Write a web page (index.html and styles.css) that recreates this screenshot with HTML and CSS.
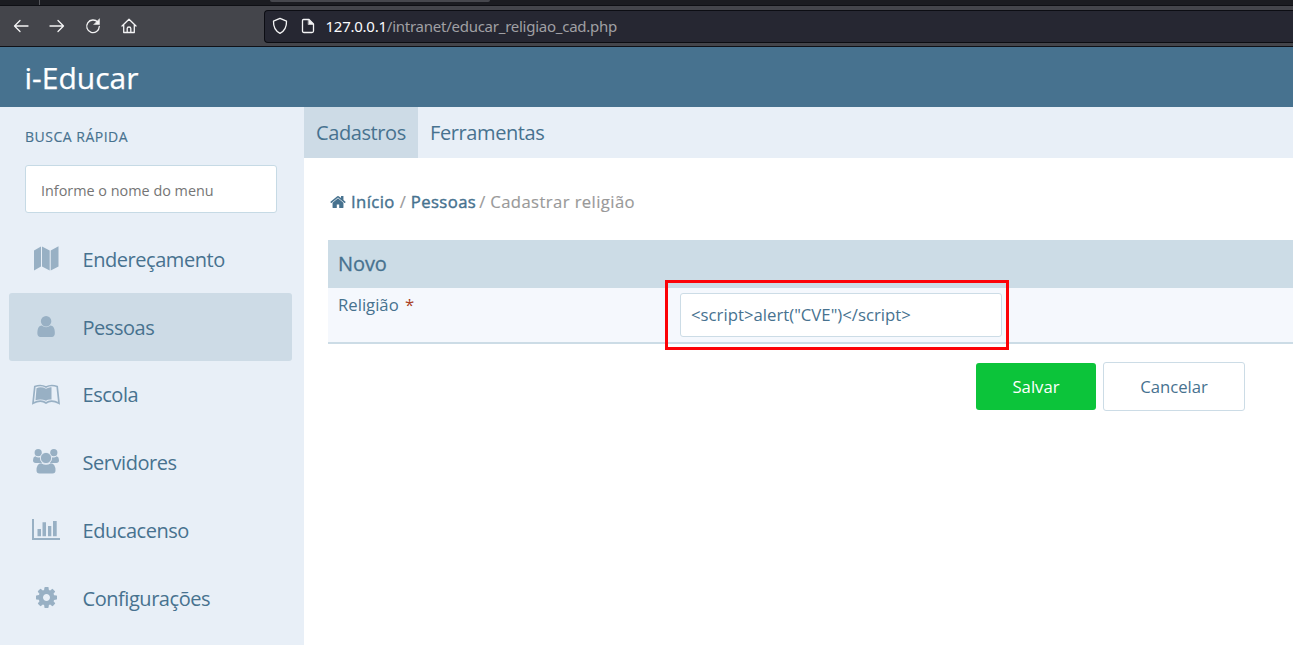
FILE: index.html
```html
<!DOCTYPE html>
<html lang="pt-BR">
<head>
<meta charset="utf-8">
<title>i-Educar</title>
<link rel="stylesheet" href="styles.css">
</head>
<body>
<div class="tabstrip"><span class="tab-divider"></span><span class="tab-edge"></span></div>
<div class="toolbar">
  <div class="nav-buttons">
    <svg width="16" height="16" viewBox="0 0 16 16"><path d="M15 8H1.5M7 2.5L1.5 8L7 13.5"/></svg>
    <svg width="16" height="16" viewBox="0 0 16 16"><path d="M1 8h13.500M9 2.500L14.500 8L9 13.500"/></svg>
    <svg width="16" height="16" viewBox="0 0 16 16"><path d="M12.800 4.200A6.300 6.300 0 1 0 14.300 8.500"/><path class="solid" d="M14.500 1v5.500H9z"/></svg>
    <svg width="16" height="16" viewBox="0 0 16 16"><path d="M1 8L8 1.200L15 8M2.700 6.700v7.800h10.600V6.700M6.200 14.500v-4q0-1.500 1.800-1.500t1.800 1.500v4"/></svg>
  </div>
  <div class="address">
    <svg width="16" height="18" viewBox="0 0 16 18"><path d="M8 1.300L14.500 4.200C14.700 9.500 12.500 14 8 16.300C3.500 14 1.300 9.500 1.500 4.200Z"/></svg>
    <svg width="14" height="16" viewBox="0 0 14 16"><path d="M2.500 1.500H8L12.500 6v7q0 1.500-1.500 1.500H3Q1.500 14.500 1.500 13V2.500Q1.500 1.500 2.500 1.500Z"/><path class="solid" d="M7.500 1.500L12.500 6.500H7.500z"/></svg>
    <span class="url"><b>127.0.0.1</b>/intranet/educar_religiao_cad.php</span>
  </div>
</div>
<header class="brand">i-Educar</header>
<div class="layout">
  <aside class="sidebar">
    <div class="search-title">BUSCA RÁPIDA</div>
    <input class="search" type="text" placeholder="Informe o nome do menu">
    <nav class="menu">
      <a class="item"><svg width="28" height="28" viewBox="0 0 28 28"><path d="M2 5.500L9 1.500V21.500L2 25.500ZM10 1.500L17.700 5.500V25.500L10 21.500ZM18.700 5.500L26.500 1.300V21.500L18.700 25.500Z"/></svg><span>Endereçamento</span></a>
      <a class="item active"><svg width="28" height="28" viewBox="0 0 28 28"><path transform="translate(1.850 1.250) scale(.01367)" d="M1536 1399q0 109-62.500 187t-150.500 78h-854q-88 0-150.500-78t-62.500-187q0-85 8.500-160.500t31.500-152 58.500-131 94-89 134.500-34.500q131 128 313 128t313-128q76 0 134.500 34.500t94 89 58.500 131 31.500 152 8.500 160.500zm-256-887q0 159-112.500 271.500t-271.500 112.500-271.500-112.500-112.500-271.500 112.500-271.500 271.500-112.500 271.500 112.500 112.500 271.500z"/></svg><span>Pessoas</span></a>
      <a class="item"><svg width="28" height="28" viewBox="0 0 28 28"><path class="outline" d="M2.800 5.500Q9 3.300 14 6Q19 3.300 25.200 5.500L27 22.200Q19 18.200 14 22Q9 18.200 1 22.200Z"/><path d="M4.500 7.300Q9 5.200 14 7.800Q17 6 19.500 6.300V18.600Q16 18.200 14 19.800Q9 17.500 3.500 19.300Z"/></svg><span>Escola</span></a>
      <a class="item"><svg width="28" height="28" viewBox="0 0 28 28"><circle cx="6.200" cy="3.700" r="3.600"/><circle cx="21.800" cy="3.700" r="3.600"/><path d="M3.200 7.300Q6 9.100 8 8.200Q8 11.500 10 14H3.700Q1 14 1 11.300Q1 8 3.200 7.300ZM24.800 7.300Q22 9.100 20 8.200Q20 11.500 18 14H24.300Q27 14 27 11.300Q27 8 24.800 7.300Z"/><path d="M9.300 14.200Q14 17.400 18.700 14.200Q23.500 14.600 23.500 21.500Q23.500 24.500 20.500 24.500H7.500Q4.500 24.500 4.500 21.500Q4.500 14.600 9.300 14.200Z"/><circle class="front" cx="14" cy="9" r="5.600"/></svg><span>Servidores</span></a>
      <a class="item"><svg width="28" height="28" viewBox="0 0 28 28"><path d="M0 2H2V21H28V23H0ZM5.500 12H9V19.300H5.500ZM10.500 5.300H14V19.300H10.500ZM16 9H19.300V19.300H16ZM21 4H24.700V19.300H21Z"/></svg><span>Educacenso</span></a>
      <a class="item"><svg width="28" height="28" viewBox="0 0 28 28"><path transform="translate(2.250 .250) scale(.01367)" d="M1152 896q0-106-75-181t-181-75-181 75-75 181 75 181 181 75 181-75 75-181zm512-109v222q0 12-8 23t-20 13l-185 28q-19 54-39 91 35 50 107 138 10 12 10 25t-9 23q-27 37-99 108t-94 71q-12 0-26-9l-138-108q-44 23-91 38-16 136-29 186-7 28-36 28h-222q-14 0-24.500-8.500t-11.500-21.500l-28-184q-49-16-90-37l-141 107q-10 9-25 9-14 0-25-11-126-114-165-168-7-10-7-23 0-12 8-23 15-21 51-66.500t54-70.500q-27-50-41-99l-183-27q-13-2-21-12.500t-8-23.500v-222q0-12 8-23t19-13l186-28q14-46 39-92-40-57-107-138-10-12-10-24 0-10 9-23 26-36 98.500-107.500t94.500-71.500q13 0 26 10l138 107q44-23 91-38 16-136 29-186 7-28 36-28h222q14 0 24.500 8.500t11.500 21.500l28 184q49 16 90 37l142-107q9-9 24-9 13 0 25 10 129 119 165 170 7 8 7 22 0 12-8 23-15 21-51 66.500t-54 70.500q26 50 41 98l183 28q13 2 21 12.500t8 23.500z"/></svg><span>Configurações</span></a>
    </nav>
  </aside>
  <main class="main">
    <nav class="tabs"><a class="tab current">Cadastros</a><a class="tab">Ferramentas</a></nav>
    <div class="content">
      <div class="crumbs">
        <svg width="16" height="16" viewBox="50 50 1692 1692"><path d="M1472 992v480q0 26-19 45t-45 19h-384v-384h-256v384h-384q-26 0-45-19t-19-45v-480q0-1 .500-3t.500-3l575-474 575 474q1 2 1 6zm223-69l-62 74q-8 9-21 11h-3q-13 0-21-7l-692-577-692 577q-12 8-24 7-13-2-21-11l-62-74q-8-10-7-23.500t11-21.500l719-599q32-26 76-26t76 26l244 204v-195q0-14 9-23t23-9h192q14 0 23 9t9 23v408l219 182q10 8 11 21.500t-7 23.500z"/></svg>
        <a class="crumb-link">Início</a><span class="sep">/</span><a class="crumb-link">Pessoas</a><span class="sep2">/</span><span class="here">Cadastrar religião</span>
      </div>
      <section class="form">
        <h2 class="form-title">Novo</h2>
        <div class="form-row">
          <label class="form-label">Religião <span class="required">*</span></label>
          <div class="field"><input class="text" type="text" value="&lt;script&gt;alert(&quot;CVE&quot;)&lt;/script&gt;"><span class="highlight"></span></div>
        </div>
      </section>
      <div class="actions"><button class="btn save">Salvar</button><button class="btn cancel">Cancelar</button></div>
    </div>
  </main>
</div>
</body>
</html>
```
FILE: styles.css
```css
* { box-sizing: border-box; }
body { margin: 0; height: 645px; overflow: hidden; background: #fff; color: #47728f; font-family: "Open Sans", sans-serif; font-size: 16px; }
input, button { font-family: inherit; outline: none; margin: 0; }
.tabstrip { height: 6px; display: flex; background: #1b1c21; border-bottom: 1px solid #0e0f14; }
.tab-divider { width: 1px; margin-left: 39px; background: #55565b; }
.tab-edge { width: 220px; height: 2px; margin-left: 230px; background: #46474d; border-radius: 0 0 3px 3px; }
.toolbar { height: 41px; display: flex; background: #44454b; border-bottom: 1px solid #101117; }
.nav-buttons { width: 264px; padding-left: 13px; display: flex; align-items: center; gap: 20px; }
.toolbar svg { fill: none; stroke: #f4f4f5; stroke-width: 1.300; stroke-linecap: round; stroke-linejoin: round; flex: none; }
.toolbar svg .solid { fill: #f4f4f5; stroke-width: .5; }
.address { flex: 1; height: 33px; margin-top: 3.500px; padding-left: 7px; display: flex; align-items: center; background: #262732; border: 1px solid #0c0d13; border-right: 0; border-radius: 4px 0 0 4px; }
.address svg + svg { margin-left: 13px; }
.url { margin-left: 10.500px; font-family: "Noto Sans", sans-serif; font-size: 15px; letter-spacing: -.25px; color: #a0a0a4; white-space: nowrap; }
.url b { font-weight: 400; color: #fbfbfe; }
.brand { height: 60px; padding-left: 24.500px; background: #47728f; color: #fff; font-size: 30px; line-height: 62px; -webkit-text-stroke: .25px #fff; }
.layout { display: flex; height: 538px; }
.sidebar { width: 304px; background: #e8eff7; }
.search-title { padding: 20px 0 0 25px; height: 58px; font-size: 14px; line-height: 20px; letter-spacing: .5px; -webkit-text-stroke: .15px #47728f; }
.search { display: block; width: 252px; height: 48px; margin-left: 25px; padding: 3px 15px 0; border: 1px solid #c6dae5; border-radius: 3px; background: #fff; font-size: 14.400px; }
.search::placeholder { color: #757575; opacity: 1; }
.menu { padding: 12px 12px 0 9px; }
.item { height: 68px; padding-left: 23px; display: flex; align-items: center; border-radius: 3px; font-size: 20px; letter-spacing: -.45px; }
.item svg { fill: #98b0c4; margin-right: 22.500px; flex: none; }
.item .outline { fill: none; stroke: #98b0c4; stroke-width: 1.700; }
.item .front { stroke: #e8eff7; stroke-width: .8; }
.item span { padding-top: 1px; }
.item:nth-child(n+3) span { padding-top: 0; margin-top: -1px; }
.active { background: #cddbe6; }
.main { flex: 1; min-width: 0; }
.tabs { height: 51px; display: flex; background: #e8eff7; }
.tab { padding: 0 12px; font-size: 20px; line-height: 51px; letter-spacing: -.4px; }
.current { width: 114px; background: #cddbe6; }
.content { padding: 32px 0 0 24px; }
.crumbs { height: 50px; display: flex; align-items: center; padding: 0 0 27px 2px; font-size: 16.700px; line-height: 22px; letter-spacing: .4px; white-space: nowrap; }
.crumbs svg { fill: #47728f; margin-right: 5px; }
.crumb-link { -webkit-text-stroke: .4px #47728f; }
.sep, .sep2, .here { color: #999; -webkit-text-stroke: .15px #999; }
.sep { margin: 0 4.500px 0 5px; }
.sep2 { margin: 0 4.500px 0 3px; }
.form-title { height: 48px; margin: 0; padding-left: 10px; background: #ccdce6; font-size: 20px; line-height: 48px; font-weight: 400; letter-spacing: -.1px; -webkit-text-stroke: .3px #47728f; }
.form-row { height: 56px; display: grid; grid-template-columns: 352px 1fr; background: #f5f8fd; border-bottom: 2px solid #ccdce6; }
.form-label { padding: 6px 0 0 10px; font-size: 16.700px; line-height: 22px; }
.required { color: #a94024; margin-left: 2px; }
.field { position: relative; padding-top: 5px; }
.text { display: block; width: 322px; height: 44px; padding: 0 10px 2px; border: 1px solid #ccdce6; border-radius: 3px; background: #fff; color: #47728f; font-size: 16.750px; }
.highlight { position: absolute; left: -15.500px; top: -8px; width: 344.500px; height: 70px; border: 3px solid #fc0207; }
.actions { display: flex; justify-content: flex-end; align-items: center; gap: 7px; padding: 18px 48px 0 0; }
.btn { border-radius: 3px; font-size: 16.700px; }
.save { width: 120px; height: 47px; border: 0; background: #0cc43a; color: #fff; }
.cancel { width: 142px; height: 49px; border: 1px solid #ccdce6; background: #fff; color: #47728f; }
```
